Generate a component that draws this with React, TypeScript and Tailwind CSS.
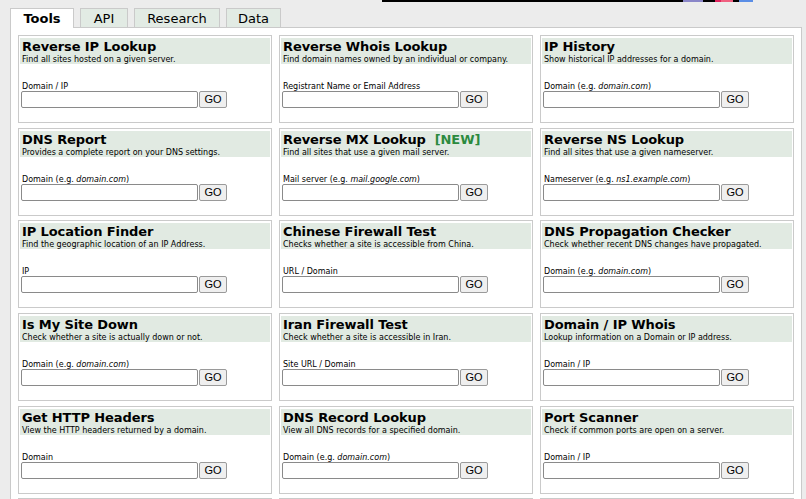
import React from "react";

type Tool = {
  title: string;
  isNew?: boolean;
  desc: string;
  label: React.ReactNode;
};

const eg = (prefix: string, sample: string) => (
  <>
    {prefix} (e.g. <i>{sample}</i>)
  </>
);

const tools: Tool[] = [
  { title: "Reverse IP Lookup", desc: "Find all sites hosted on a given server.", label: "Domain / IP" },
  { title: "Reverse Whois Lookup", desc: "Find domain names owned by an individual or company.", label: "Registrant Name or Email Address" },
  { title: "IP History", desc: "Show historical IP addresses for a domain.", label: eg("Domain", "domain.com") },
  { title: "DNS Report", desc: "Provides a complete report on your DNS settings.", label: eg("Domain", "domain.com") },
  { title: "Reverse MX Lookup", isNew: true, desc: "Find all sites that use a given mail server.", label: eg("Mail server", "mail.google.com") },
  { title: "Reverse NS Lookup", desc: "Find all sites that use a given nameserver.", label: eg("Nameserver", "ns1.example.com") },
  { title: "IP Location Finder", desc: "Find the geographic location of an IP Address.", label: "IP" },
  { title: "Chinese Firewall Test", desc: "Checks whether a site is accessible from China.", label: "URL / Domain" },
  { title: "DNS Propagation Checker", desc: "Check whether recent DNS changes have propagated.", label: eg("Domain", "domain.com") },
  { title: "Is My Site Down", desc: "Check whether a site is actually down or not.", label: eg("Domain", "domain.com") },
  { title: "Iran Firewall Test", desc: "Check whether a site is accessible in Iran.", label: "Site URL / Domain" },
  { title: "Domain / IP Whois", desc: "Lookup information on a Domain or IP address.", label: "Domain / IP" },
  { title: "Get HTTP Headers", desc: "View the HTTP headers returned by a domain.", label: "Domain" },
  { title: "DNS Record Lookup", desc: "View all DNS records for a specified domain.", label: eg("Domain", "domain.com") },
  { title: "Port Scanner", desc: "Check if common ports are open on a server.", label: "Domain / IP" },
];

const ToolCard = ({ tool }: { tool: Tool }) => (
  <div className="h-[88px] border border-[#cacaca] bg-white px-px pt-[2px]">
    <div className="h-[26px] bg-[#e1eae2] pl-[2px] pt-px">
      <div className="text-[13px] font-bold leading-[16px] tracking-[-0.1px] whitespace-nowrap">
        {tool.title}
        {tool.isNew && <span className="ml-[9px] text-[#2b8a3e]">[NEW]</span>}
      </div>
      <div className="text-[8px] leading-[9px] whitespace-nowrap">{tool.desc}</div>
    </div>
    <div className="pt-[18px] pl-[2px] text-[8px] leading-[9px] whitespace-nowrap">{tool.label}</div>
    <div className="flex pl-[1px]">
      <input
        type="text"
        className="h-[17px] w-[177px] rounded-[2px] border border-[#8a8a8a] bg-white"
      />
      <button className="ml-px h-[17px] w-[28px] rounded-[2px] border border-[#9a9a9a] bg-[#efefef] font-['Liberation_Sans',Arial,sans-serif] text-[11px] leading-none">
        GO
      </button>
    </div>
  </div>
);

// the next row of tools is below the fold; only the top edges show
const EmptyCard = () => (
  <div className="h-[88px] border border-[#cacaca] bg-white px-px pt-[2px]">
    <div className="h-[26px] bg-[#e1eae2]" />
  </div>
);

const tabs = [
  { name: "Tools", w: "w-[64px]" },
  { name: "API", w: "w-[48px]" },
  { name: "Research", w: "w-[86px]" },
  { name: "Data", w: "w-[55px]" },
];

export default function App() {
  return (
    <div className="h-screen overflow-hidden bg-[#ececec] font-['DejaVu_Sans',Verdana,sans-serif] text-black">
      <div className="flex h-[2px] pl-[382px]">
        <div className="w-[301px] bg-black" />
        <div className="w-[20px] bg-[#8a86c8]" />
        <div className="w-[12px] bg-black" />
        <div className="w-[6px] bg-[#e0245e]" />
        <div className="w-[12px] bg-[#f06080]" />
        <div className="w-[6px] bg-black" />
        <div className="w-[14px] bg-[#5b8ee6]" />
      </div>

      <div className="flex gap-[6px] pl-[10px] pt-[6px]">
        {tabs.map((t, i) =>
          i === 0 ? (
            <div
              key={t.name}
              className={`${t.w} relative z-10 -mb-px h-[20px] border border-b-0 border-[#cacaca] bg-white text-center text-[13px] font-bold leading-[19px]`}
            >
              {t.name}
            </div>
          ) : (
            <div
              key={t.name}
              className={`${t.w} h-[19px] border border-b-0 border-[#cacaca] bg-[#e2ebe4] text-center text-[13px] leading-[19px]`}
            >
              {t.name}
            </div>
          )
        )}
      </div>

      <div className="ml-[10px] w-[792px] border border-[#cacaca] bg-white p-[7px]">
        <div className="grid grid-cols-[254px_254px_254px] gap-x-[7px] gap-y-[4.7px]">
          {tools.map((t) => (
            <ToolCard key={t.title} tool={t} />
          ))}
          <EmptyCard />
          <EmptyCard />
          <EmptyCard />
        </div>
      </div>
    </div>
  );
}
